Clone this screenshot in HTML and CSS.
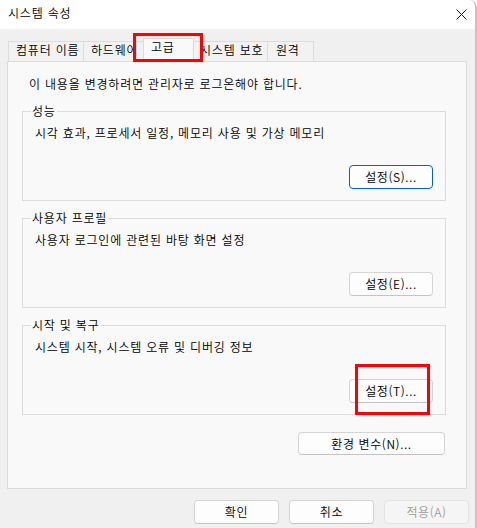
FILE: index.html
```html
<!DOCTYPE html>
<html lang="ko">
<head>
<meta charset="utf-8">
<title>시스템 속성</title>
<link rel="stylesheet" href="styles.css">
</head>
<body>
<div class="window">
  <div class="titlebar">
    <span class="title">시스템 속성</span>
    <svg class="close" width="11" height="11" viewBox="0 0 11 11" aria-hidden="true">
      <path d="M0.5 0.5 L10.5 10.5 M10.5 0.5 L0.5 10.5" stroke="#1a1a1a" stroke-width="1" fill="none"/>
    </svg>
  </div>
  <div class="tabs">
    <div class="tab t1">컴퓨터 이름</div>
    <div class="tab t2">하드웨어</div>
    <div class="tab t3 active">고급</div>
    <div class="tab t4">시스템 보호</div>
    <div class="tab t5">원격</div>
  </div>
  <div class="panel">
    <p class="notice">이 내용을 변경하려면 관리자로 로그온해야 합니다.</p>
    <section class="group first">
      <div class="group-label">성능</div>
      <p class="group-desc">시각 효과, 프로세서 일정, 메모리 사용 및 가상 메모리</p>
      <div class="group-actions"><button class="btn btn-group btn-default">설정(S)...</button></div>
    </section>
    <section class="group">
      <div class="group-label">사용자 프로필</div>
      <p class="group-desc">사용자 로그인에 관련된 바탕 화면 설정</p>
      <div class="group-actions"><button class="btn btn-group">설정(E)...</button></div>
    </section>
    <section class="group">
      <div class="group-label">시작 및 복구</div>
      <p class="group-desc">시스템 시작, 시스템 오류 및 디버깅 정보</p>
      <div class="group-actions"><button class="btn btn-group">설정(T)...</button></div>
    </section>
    <div class="env-row"><button class="btn btn-env">환경 변수(N)...</button></div>
  </div>
  <div class="footer">
    <button class="btn btn-foot">확인</button>
    <button class="btn btn-foot">취소</button>
    <button class="btn btn-foot" disabled>적용(A)</button>
  </div>
  <div class="highlight hl-tab"></div>
  <div class="highlight hl-btn"></div>
</div>
</body>
</html>
```

FILE: styles.css
```css
* {
  box-sizing: border-box;
}

html,
body {
  margin: 0;
  padding: 0;
}

body {
  background: #ffffff;
  font-family: "Noto Sans CJK KR", "Noto Sans", sans-serif;
  font-size: 12px;
  font-weight: 350;
  letter-spacing: 0.8px;
  color: #000000;
}

.window {
  position: relative;
  width: 477px;
  height: 528px;
  background: #f0f0f0;
  border-right: 2px solid #c4c4c4;
  border-top-right-radius: 8px;
  overflow: hidden;
}

.titlebar {
  height: 29px;
  background: #ffffff;
  display: flex;
  align-items: flex-start;
  padding: 5px 8px 0 8px;
}

.title {
  line-height: 16px;
}

.close {
  margin-left: auto;
  margin-top: 4px;
}

.tabs {
  display: flex;
  align-items: flex-end;
  height: 24px;
  margin: 9px 0 0 8px;
}

.tab {
  height: 20px;
  margin-bottom: 1px;
  margin-right: -1px;
  border: 1px solid #dcdcdc;
  border-bottom: none;
  background: #f2f2f2;
  padding-left: 7px;
  line-height: 16px;
  white-space: nowrap;
  overflow: hidden;
}

.tab.active {
  height: 24px;
  margin-bottom: 0;
  background: #f9f9f9;
  position: relative;
  z-index: 1;
}

.t1 { width: 76px; }
.t2 { width: 61px; }
.t3 { width: 51px; }
.t4 { width: 75px; padding-left: 6px; }
.t5 { width: 47px; padding-left: 8px; }

.panel {
  margin: -1px 0 0 7px;
  width: 460px;
  height: 428px;
  background: #f9f9f9;
  border: 1px solid #dcdcdc;
  padding: 14px 0 0 14px;
}

.notice {
  margin: 0 0 0 7px;
  line-height: 16px;
}

.group {
  width: 424px;
  height: 90px;
  border: 1px solid #dcdcdc;
  margin-top: 17px;
  display: flex;
  flex-direction: column;
}

.group.first {
  margin-top: 19px;
}

.group-label {
  align-self: flex-start;
  margin: -9px 0 0 8px;
  padding: 0 1px;
  background: #f9f9f9;
  line-height: 16px;
}

.group-desc {
  margin: 6px 0 0 12px;
  line-height: 16px;
}

.group-actions {
  display: flex;
  justify-content: flex-end;
  margin-top: 24px;
  padding-right: 12px;
}

.btn {
  font-family: inherit;
  font-size: 12px;
  font-weight: inherit;
  letter-spacing: 0.6px;
  color: #000000;
  background: #fdfdfd;
  border: 1px solid #d5d5d5;
  border-bottom-color: #c4c4c4;
  border-radius: 4px;
  padding: 0;
  line-height: 16px;
}

.btn-group {
  width: 84px;
  height: 24px;
}

.btn-default {
  border: 1px solid #0067c0;
}

.env-row {
  width: 424px;
  display: flex;
  justify-content: flex-end;
  padding-right: 1px;
  margin-top: 17px;
}

.btn-env {
  width: 147px;
  height: 23px;
}

.footer {
  display: flex;
  justify-content: flex-end;
  gap: 10px;
  margin-top: 11px;
  padding-right: 6px;
}

.btn-foot {
  width: 85px;
  height: 24px;
}

.btn-foot:disabled {
  background: #f5f5f5;
  border-color: #e3e3e3;
  color: #9d9d9d;
}

.highlight {
  position: absolute;
  border: 3px solid #ff0000;
  pointer-events: none;
  z-index: 5;
}

.hl-tab {
  left: 133px;
  top: 33px;
  width: 70px;
  height: 29px;
}

.hl-btn {
  left: 355px;
  top: 364px;
  width: 75px;
  height: 51px;
}
```
